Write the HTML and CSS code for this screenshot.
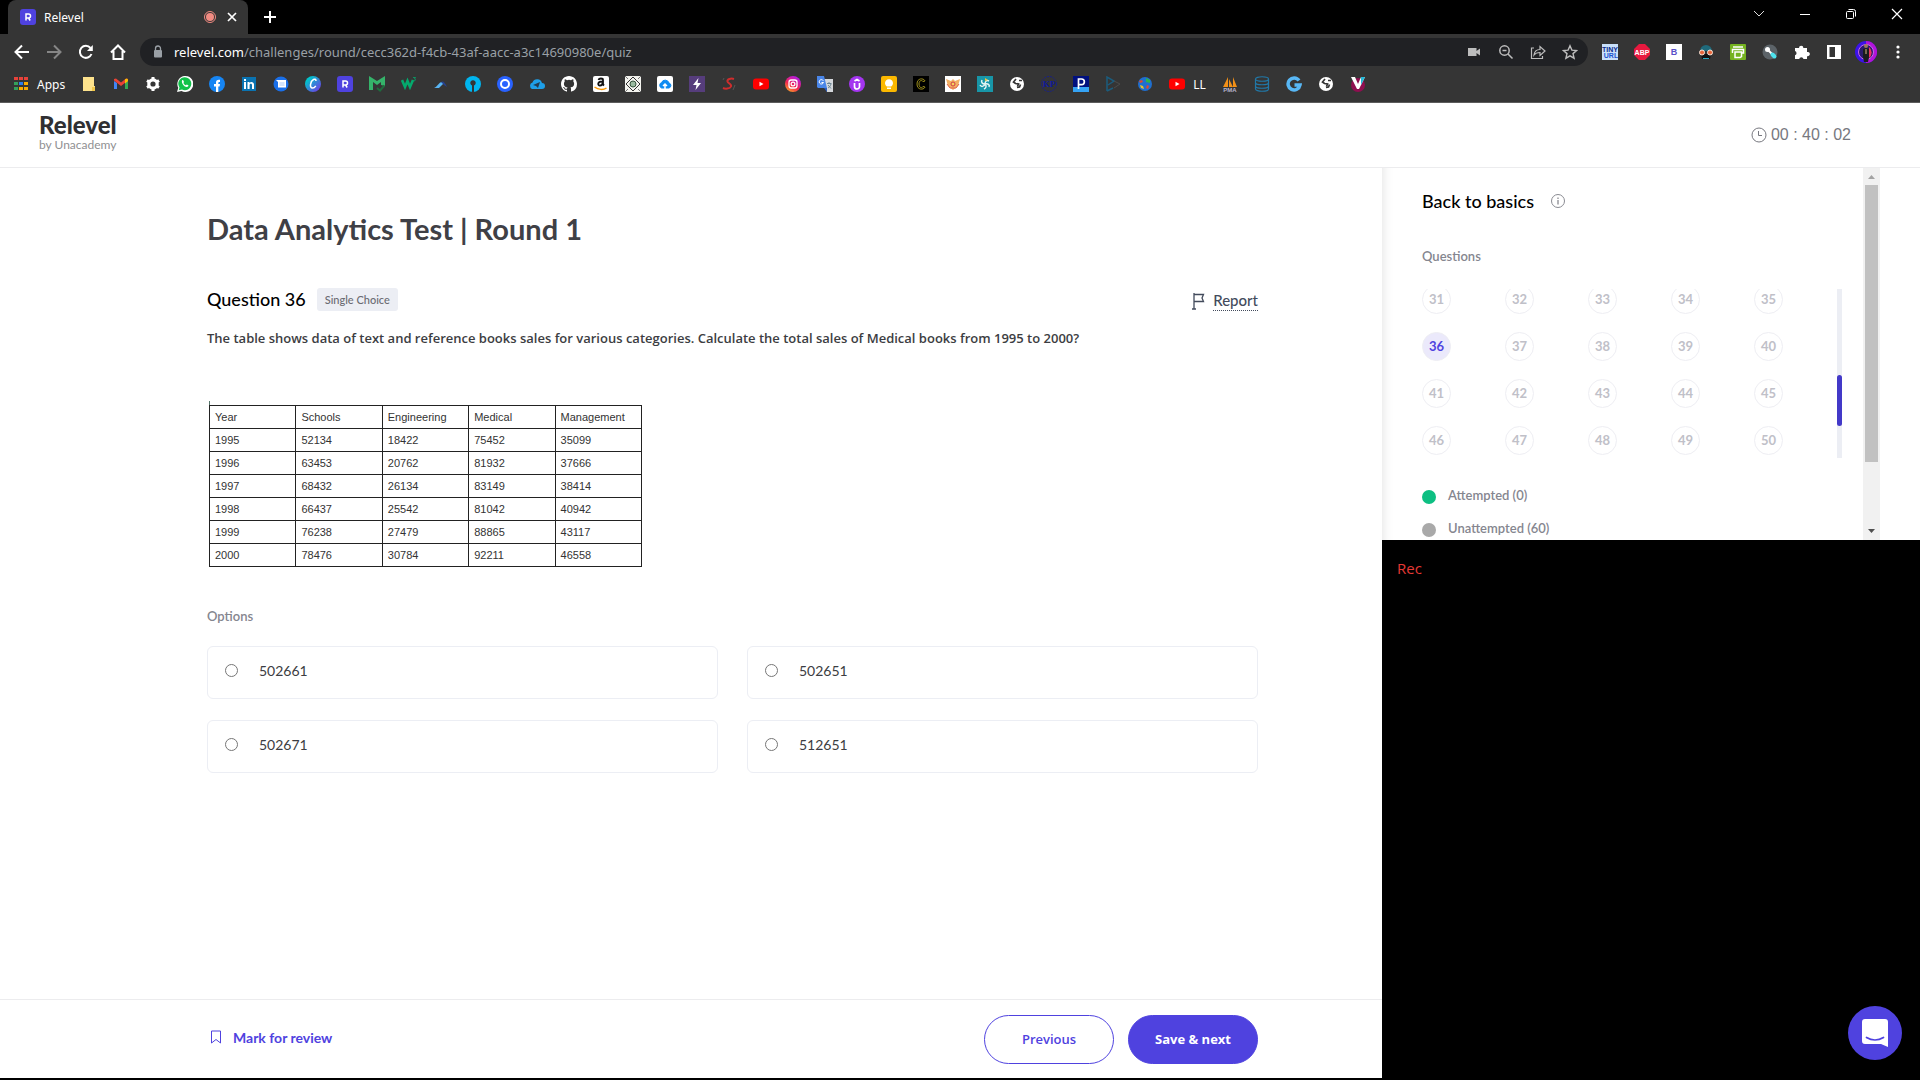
FILE: index.html
```html
<!DOCTYPE html>
<html lang="en">
<head>
<meta charset="utf-8">
<title>Relevel</title>
<link rel="stylesheet" href="styles.css">
</head>
<body>
<header class="browser">
  <div class="tabstrip">
    <div class="tab">
      <svg class="ic" viewBox="0 0 16 16"><rect width="16" height="16" rx="3" fill="#4f42df"/><path d="M6 11.500V5h2.500a1.900 1.900 0 0 1 0 4H6M8.500 9l1.700 2.500" fill="none" stroke="#fff" stroke-width="1.500"/></svg>
      <span class="tab-title">Relevel</span>
      <svg class="ic" viewBox="0 0 16 16"><circle cx="8" cy="8" r="5.500" fill="none" stroke="#f28b82"/><circle cx="8" cy="8" r="4" fill="#f28b82"/></svg>
      <button class="plain" aria-label="Close tab"><svg class="ic" viewBox="0 0 16 16"><path d="M4 4l8 8M12 4l-8 8" stroke="#fff" stroke-width="1.700"/></svg></button>
    </div>
    <button class="plain newtab" aria-label="New tab"><svg class="ic" viewBox="0 0 16 16"><path d="M8 2v12M2 8h12" stroke="#fff" stroke-width="2"/></svg></button>
    <div class="window-buttons">
      <button class="plain" aria-label="Search tabs"><svg class="ic" viewBox="0 0 16 16"><path d="M3 5l5 5 5-5" fill="none" stroke="#ddd"/></svg></button>
      <button class="plain" aria-label="Minimize"><svg class="ic" viewBox="0 0 16 16"><path d="M3 8.500h10" stroke="#fff"/></svg></button>
      <button class="plain" aria-label="Restore"><svg class="ic" viewBox="0 0 16 16"><rect x="3.500" y="5.500" width="7" height="7" rx="1" fill="none" stroke="#fff"/><path d="M5.500 3.500h5a2 2 0 0 1 2 2v5" fill="none" stroke="#fff"/></svg></button>
      <button class="plain" aria-label="Close"><svg class="ic" viewBox="0 0 16 16"><path d="M3 3l10 10M13 3L3 13" stroke="#fff" stroke-width="1.200"/></svg></button>
    </div>
  </div>
  <div class="toolbar">
    <button class="plain" aria-label="Back"><svg class="ic" viewBox="0 0 16 16"><path d="M15 8H2M8 1.500L1.500 8 8 14.500" fill="none" stroke="#fff" stroke-width="2"/></svg></button>
    <button class="plain" aria-label="Forward"><svg class="ic" viewBox="0 0 16 16"><path d="M1 8h13M8 1.500L14.500 8 8 14.500" fill="none" stroke="#868686" stroke-width="2"/></svg></button>
    <button class="plain" aria-label="Reload"><svg class="ic" viewBox="0 0 16 16"><path d="M13.500 10A6 6 0 1 1 12.500 4" fill="none" stroke="#fff" stroke-width="2"/><path d="M14.800 1v6H9z" fill="#fff"/></svg></button>
    <button class="plain" aria-label="Home"><svg class="ic" viewBox="0 0 16 16"><path d="M1 8.500L8 1.500l7 7M3.500 7v8h9V7" fill="none" stroke="#fff" stroke-width="2"/></svg></button>
    <div class="omnibox">
      <svg class="ic" viewBox="0 0 16 16"><rect x="4" y="6" width="8" height="7.500" rx="1" fill="#9aa0a6"/><path d="M5.500 6V4.500a2.500 2.500 0 0 1 5 0V6" fill="none" stroke="#9aa0a6" stroke-width="1.300"/></svg>
      <span class="url"><b>relevel.com</b>/challenges/round/cecc362d-f4cb-43af-aacc-a3c14690980e/quiz</span>
      <span class="omni-icons">
        <svg class="ic" viewBox="0 0 16 16"><path d="M2 4h8.500v3L14 4.500v7L10.500 9v3H2z" fill="#bdbdbd"/></svg>
        <svg class="ic" viewBox="0 0 16 16"><circle cx="6.500" cy="6.500" r="4.700" fill="none" stroke="#bdbdbd" stroke-width="1.500"/><path d="M10 10l4.500 4.500M4.500 6.500h4" stroke="#bdbdbd" stroke-width="1.500"/></svg>
        <svg class="ic" viewBox="0 0 16 16"><path d="M4 4H1.500v10.500h11V12M4 11c.5-4 3-5.500 6-5.500V2.500l5 4.500-5 4.500V8.500C7.500 8.500 5.500 9 4 11z" fill="none" stroke="#bdbdbd" stroke-width="1.200"/></svg>
        <svg class="ic" viewBox="0 0 16 16"><path d="M8 1.800l1.900 4.300 4.700.4-3.600 3.100 1.100 4.600L8 11.800l-4.100 2.400L5 9.600 1.400 6.500l4.700-.4z" fill="none" stroke="#bdbdbd" stroke-width="1.400"/></svg>
      </span>
    </div>
    <div class="extensions">
      <svg class="ic" viewBox="0 0 16 16"><rect width="16" height="16" fill="#c9e0fa"/><text x="8" y="8" text-anchor="middle" class="t7" fill="#0b2a8c">TINY</text><text x="9" y="14" text-anchor="middle" class="t7" fill="#1d53d0">URL</text></svg>
      <svg class="ic" viewBox="0 0 16 16"><path d="M5 0h6l5 5v6l-5 5H5l-5-5V5z" fill="#e8193f"/><text x="8" y="10.500" text-anchor="middle" class="t7" fill="#fff">ABP</text></svg>
      <svg class="ic" viewBox="0 0 16 16"><rect width="16" height="16" fill="#fff"/><text x="8" y="11" text-anchor="middle" class="t9" fill="#5a50c8">B</text></svg>
      <svg class="ic" viewBox="0 0 16 16"><path d="M2 7a6 6 0 0 1 12 0z" fill="#1f6a7c"/><path d="M3 10h10l-1 5H4z" fill="#111"/><path d="M5 14.500h6" stroke="#2aa7bd"/><circle cx="4" cy="8.500" r="2.500" fill="#e8673c" stroke="#f5e6da"/><circle cx="12" cy="8.500" r="2.500" fill="#e8673c" stroke="#f5e6da"/></svg>
      <svg class="ic" viewBox="0 0 16 16"><rect width="16" height="16" rx="1" fill="#75b320"/><path d="M3 3h10M2.500 9V5.500h11V9h-2M5 8h6.500v4.500L10 13.500H5z" fill="none" stroke="#fff" stroke-width="1.500"/></svg>
      <svg class="ic" viewBox="0 0 16 16"><circle cx="8" cy="8" r="7.500" fill="#5c6368"/><circle cx="5.500" cy="5.500" r="2.500" fill="#fff"/><path d="M6 6l4 4" stroke="#fff" stroke-width="2"/><path d="M10.500 10.500l2 2" stroke="#4ee3ee" stroke-width="4" stroke-linecap="round"/></svg>
      <svg class="ic" viewBox="0 0 16 16"><path d="M1 4h4a2.200 2.200 0 1 1 4.400 0H13v4a2.200 2.200 0 1 1 0 4.200V15H9.500a2.200 2.200 0 0 0-4.300 0H1v-3.700a2.200 2.200 0 0 0 0-4.200z" fill="#fff"/></svg>
      <svg class="ic" viewBox="0 0 16 16"><path d="M1 1h14v14H1zM3.500 3v10H9V3z" fill="#fff" fill-rule="evenodd"/></svg>
      <svg class="avatar" viewBox="0 0 22 22"><circle cx="11" cy="11" r="11" fill="#3b12e8"/><path d="M11 0a11 11 0 0 1 0 22z" fill="#b313d8"/><circle cx="11" cy="11" r="7.500" fill="#2b1a6e" stroke="#c86be8"/><path d="M14 6a7 7 0 0 1 0 11z" fill="#f0325e"/><circle cx="11" cy="5" r="2" fill="#9b7a55"/><path d="M8 8l3-1 3 1v8l-1 5H9l-1-5z" fill="#1b1c1e"/><path d="M11 8v5" stroke="#d6b684"/></svg>
      <svg class="ic" viewBox="0 0 16 16"><g fill="#fff"><circle cx="8" cy="3" r="1.600"/><circle cx="8" cy="8" r="1.600"/><circle cx="8" cy="13" r="1.600"/></g></svg>
    </div>
  </div>
  <nav class="bookmarks" aria-label="Bookmarks">
    <a href="#" class="apps"><svg class="ic" viewBox="0 0 16 16"><g fill="#e8423a"><path d="M1 1h4v3H1zM6 1h4v3H6zM11 1h4v3h-4z"/></g><path d="M1 6h4v3H1zM1 11h4v3H1z" fill="#34a05a"/><path d="M6 6h4v3H6z" fill="#2b7de9"/><path d="M11 6h4v3h-4zM6 11h4v3H6zM11 11h4v3h-4z" fill="#f9ab00"/></svg>Apps</a>
    <a href="#" aria-label="Folder"><svg class="ic" viewBox="0 0 16 16"><path d="M2 1h11v9h1v5H2z" fill="#fde28c"/><path d="M11 15v-4h3v4z" fill="#f2c84b"/></svg></a>
    <a href="#" aria-label="Gmail"><svg class="ic" viewBox="0 0 16 16"><path d="M1 5v8h3V7z" fill="#4285f4"/><path d="M12 7v6h3V5z" fill="#34a853"/><path d="M1 4.500V3l2-.5 5 4 5-4 2 .5v1.500L8 10z" fill="#ea4335"/><path d="M12 3.300l2-.8 1 1v1.800L12 7.500z" fill="#fbbc04"/></svg></a>
    <a href="#" aria-label="Settings"><svg class="ic" viewBox="0 0 16 16"><circle cx="8" cy="8" r="4.200" fill="none" stroke="#fff" stroke-width="3.200"/><path d="M8 1v2.500M8 12.500V15M2 4.500l2 1.200M12 10.300l2 1.200M2 11.500l2-1.200M12 5.700l2-1.200" stroke="#fff" stroke-width="3"/></svg></a>
    <a href="#" aria-label="WhatsApp"><svg class="ic" viewBox="0 0 16 16"><path d="M0 16l1.300-4.200A8 8 0 1 1 4.500 15z" fill="#fff"/><path d="M1.700 14.300l.8-2.800A6.500 6.500 0 1 1 5 13.600z" fill="#12c24b"/><path d="M5 4.500c1-1 1.500 0 2 1.500l-.6 1c.5 1 1.500 2 2.500 2.300l.9-.8c1.500.6 2.200 1 1.200 2-2 2-7-2.500-6-6z" fill="#fff"/></svg></a>
    <a href="#" aria-label="Facebook"><svg class="ic" viewBox="0 0 16 16"><circle cx="8" cy="8" r="8" fill="#1685f3"/><path d="M7 16v-5.500H5V8h2V6.500C7 4.300 8.200 3.500 11 3.800V6c-1.500 0-1.700.2-1.700 1V8H11l-.4 2.500H9.300V16z" fill="#fff"/></svg></a>
    <a href="#" aria-label="LinkedIn"><svg class="ic" viewBox="0 0 16 16"><path d="M1 1h14v14H1z" fill="#0a73b1"/><path d="M3 6h2v7H3zM3 3h2v2H3zM6.500 6h2v1c1-1.800 4.500-1.500 4.500 1.500V13h-2V9c0-1.800-2.400-1.800-2.400 0v4H6.500z" fill="#fff"/></svg></a>
    <a href="#" aria-label="Messages"><svg class="ic" viewBox="0 0 16 16"><circle cx="8" cy="8" r="7.500" fill="#1a6fe8"/><path d="M3 4h10v7.500H5V6z" fill="#fff"/><path d="M6.500 7h5M6.500 9h5" stroke="#a9c8f8"/></svg></a>
    <a href="#" aria-label="Canva"><svg class="ic" viewBox="0 0 16 16"><linearGradient id="cv" x2="1" y2="1"><stop offset=".2" stop-color="#00c4cc"/><stop offset="1" stop-color="#7d2ae8"/></linearGradient><circle cx="8" cy="8" r="8" fill="url(#cv)"/><path d="M11 5c0-2-1.500-2-2.500-1.500C5.500 5 4 12 7.500 12c1.500 0 2.500-1 3.300-2.200" fill="none" stroke="#fff" stroke-width="1.500"/></svg></a>
    <a href="#" aria-label="Relevel"><svg class="ic" viewBox="0 0 16 16"><rect width="16" height="16" rx="3" fill="#4f42df"/><path d="M6 11.500V5h2.500a1.900 1.900 0 0 1 0 4H6M8.500 9l1.700 2.500" fill="none" stroke="#fff" stroke-width="1.500"/></svg></a>
    <a href="#" aria-label="Mail check"><svg class="ic" viewBox="0 0 16 16"><path d="M0 0l8 5 8-5v10l-4-1V6L8 9 4 6v8l-4 0z" fill="#35b36a"/><path d="M8 12l3 2.500 4.500-5" fill="none" stroke="#1f6b3d" stroke-width="2"/></svg></a>
    <a href="#" aria-label="W3Schools"><svg class="ic" viewBox="0 0 16 16"><path d="M1 4l3 7 2.500-6L9 11l3-7" fill="none" stroke="#04aa6d" stroke-width="2.600"/><path d="M12 1.500h2.500L13.500 3c1.500 0 1.500 2-1 1.800" fill="none" stroke="#04aa6d" stroke-width=".8"/></svg></a>
    <a href="#" aria-label="Cloud tool"><svg class="ic" viewBox="0 0 16 16"><path d="M1 12c3-1 5-6 8-6l2 1-5 5z" fill="#58b5f4"/><path d="M8 6c2-1 3-1 6 5l-3-2z" fill="#26418f"/></svg></a>
    <a href="#" aria-label="Keyhole"><svg class="ic" viewBox="0 0 16 16"><circle cx="8" cy="8" r="8" fill="#00b5ef"/><path d="M7 16V9.500a2.700 2.700 0 1 1 2 0V16z" fill="#353535"/></svg></a>
    <a href="#" aria-label="Circle"><svg class="ic" viewBox="0 0 16 16"><circle cx="8" cy="8" r="8" fill="#2962ff"/><circle cx="8" cy="8" r="4" fill="none" stroke="#fff" stroke-width="2"/></svg></a>
    <a href="#" aria-label="Cloud send"><svg class="ic" viewBox="0 0 16 16"><path d="M3 13a3.500 3.500 0 0 1 .5-6.500A5 5 0 0 1 13 7a3 3 0 0 1 0 6z" fill="#1e9fe8"/><path d="M4 9l7-3-2 6-2-2z" fill="#233b50"/></svg></a>
    <a href="#" aria-label="GitHub"><svg class="ic" viewBox="0 0 16 16"><path fill="#fff" d="M8 0C3.580 0 0 3.580 0 8c0 3.540 2.290 6.530 5.470 7.590.4.070.55-.17.55-.38 0-.19-.01-.82-.01-1.490-2.010.37-2.530-.49-2.690-.94-.09-.23-.48-.94-.82-1.130-.28-.15-.68-.52-.01-.53.63-.01 1.080.58 1.230.82.72 1.210 1.870.87 2.330.66.07-.52.28-.87.51-1.070-1.780-.2-3.640-.89-3.640-3.950 0-.87.31-1.590.82-2.150-.08-.2-.36-1.020.08-2.120 0 0 .67-.21 2.200.82a7.600 7.600 0 0 1 4 0c1.530-1.040 2.200-.82 2.200-.82.44 1.100.16 1.920.08 2.120.51.56.82 1.270.82 2.150 0 3.070-1.870 3.750-3.650 3.950.29.25.54.73.54 1.480 0 1.070-.01 1.930-.01 2.200 0 .21.15.46.55.38A8 8 0 0 0 16 8c0-4.420-3.580-8-8-8z"/></svg></a>
    <a href="#" aria-label="Amazon"><svg class="ic" viewBox="0 0 16 16"><rect width="16" height="16" rx="2" fill="#fff"/><path d="M5.500 4c.5-2 4.500-2 4.500 0v4.500l1 1M9.500 5.500C3.500 5.500 5 10 7 9.500c1.500 0 2.500-1 2.500-2.500" fill="none" stroke="#111" stroke-width="1.800"/><path d="M1.500 11c4 3 9 3 12 1" fill="none" stroke="#ff9900" stroke-width="1.500"/></svg></a>
    <a href="#" aria-label="Diamond"><svg class="ic" viewBox="0 0 16 16"><rect width="16" height="16" fill="#f3f3ee"/><path d="M8 1l7 7-7 7-7-7z" fill="none" stroke="#333"/><circle cx="8" cy="8" r="3" fill="#9bbba0" stroke="#35523b"/><path d="M0 0l3 3M13 13l3 3M16 0l-3 3M0 16l3-3" stroke="#777"/></svg></a>
    <a href="#" aria-label="Cloud upload"><svg class="ic" viewBox="0 0 16 16"><rect width="16" height="16" rx="2" fill="#fff"/><path d="M4.500 12a3 3 0 0 1 0-5.500 4 4 0 0 1 7.500.5 2.600 2.600 0 0 1 0 5z" fill="#0d8bf2" stroke="#0d8bf2"/><path d="M8 14V8M6 10l2-2 2 2" fill="none" stroke="#fff" stroke-width="1.500"/></svg></a>
    <a href="#" aria-label="Bolt"><svg class="ic" viewBox="0 0 16 16"><path d="M0 0h16v16H0z" fill="#563d7c"/><path d="M9.500 2L4 9h3.500L6.500 14 12 7H8.500z" fill="#fff"/></svg></a>
    <a href="#" aria-label="Script S"><svg class="ic" viewBox="0 0 16 16"><path d="M13 3c-3-1-7 0-6.500 2.500C7 7.500 11 8 10 10.500 9 13 4 13 2 12" fill="none" stroke="#cf2d2d" stroke-width="2"/><path d="M3 2l-1 2M14 9l-2 5" stroke="#555"/></svg></a>
    <a href="#" aria-label="YouTube"><svg class="ic" viewBox="0 0 16 16"><rect y="2.500" width="16" height="11" rx="3" fill="#f00"/><path d="M6.500 5.700v4.600l4-2.300z" fill="#fff"/></svg></a>
    <a href="#" aria-label="Instagram"><svg class="ic" viewBox="0 0 16 16"><linearGradient id="ig" y1="1" x2=".6" y2="0"><stop offset="0" stop-color="#fdc21e"/><stop offset=".5" stop-color="#f2264f"/><stop offset="1" stop-color="#b51be0"/></linearGradient><circle cx="8" cy="8" r="8" fill="url(#ig)"/><rect x="4" y="4" width="8" height="8" rx="2.200" fill="none" stroke="#fff" stroke-width="1.300"/><circle cx="8" cy="8" r="1.900" fill="none" stroke="#fff" stroke-width="1.200"/></svg></a>
    <a href="#" aria-label="Translate"><svg class="ic" viewBox="0 0 16 16"><path d="M7 3h9v13h-6z" fill="#d5d8dc"/><path d="M0 0h7l3 12H1l-1-1z" fill="#4a86e8"/><path d="M7 12h3l0 4z" fill="#2b5cc0"/><path d="M6.300 4.700A2.200 2.200 0 1 0 6.500 6.500H4.500" fill="none" stroke="#fff"/><path d="M10 7.500h4.500M12 6v1.500M14 8c-.5 2-2 3.500-3 4M11 9l3 3.500" fill="none" stroke="#607d8b" stroke-width=".9"/></svg></a>
    <a href="#" aria-label="Udemy"><svg class="ic" viewBox="0 0 16 16"><circle cx="8" cy="8" r="8" fill="#a435f0"/><path d="M5.500 7v3.500a2.500 2.500 0 0 0 5 0V7M5.500 5L8 3.500 10.500 5" fill="none" stroke="#fff" stroke-width="1.700"/></svg></a>
    <a href="#" aria-label="Keep"><svg class="ic" viewBox="0 0 16 16"><rect width="16" height="16" rx="2" fill="#fbb800"/><path d="M5.800 10.500a4 4 0 1 1 4.400 0zM6 11.500h4V13H6z" fill="#fff"/></svg></a>
    <a href="#" aria-label="C site"><svg class="ic" viewBox="0 0 16 16"><path d="M0 0h16v16H0z"/><path d="M12 5C11 2 4 1.500 4 8s7 6 8 3l-2-.5c-1 2-4 1.500-4-2.500s3-4 4-2.500z" fill="none" stroke="#9c8e1c"/></svg></a>
    <a href="#" aria-label="Crest"><svg class="ic" viewBox="0 0 16 16"><path d="M0 0h16v16H0z" fill="#fff"/><path d="M1 3l5 2 2-2 2 2 5-2-2 7-5 4-5-4z" fill="#f2b063"/><path d="M2 8l3 4h6l3-4" fill="none" stroke="#e0604a"/><circle cx="8" cy="8" r="2" fill="#f6d55b" stroke="#d03a4b"/></svg></a>
    <a href="#" aria-label="Flower"><svg class="ic" viewBox="0 0 16 16"><path d="M0 0h16v16H0z" fill="#1896a8"/><g fill="none" stroke="#e5f5f2" stroke-width="1.500"><path d="M8 8c0-3 2-4 4-3M8 8c3-1 5 1 4 3M8 8c2 2 1 4-1 5M8 8c-1 3-4 3-5 1M8 8C5 8 4 6 5 4"/></g><path d="M8 2l3 2-3 1z" fill="#f4c534"/></svg></a>
    <a href="#" aria-label="Globe"><svg class="ic" viewBox="0 0 16 16"><circle cx="8" cy="8" r="7" fill="#fff"/><path d="M7 3L4.500 6l2 1.500 3 .5-1 2.500M10 4.500h3M8 11.500l2.500-.5 1-2.500" fill="none" stroke="#353535" stroke-width="1.700"/></svg></a>
    <a href="#" aria-label="KP"><svg class="ic" viewBox="0 0 16 16"><circle cx="8" cy="8" r="7.500" fill="none" stroke="#17208c" stroke-dasharray="2 1"/><text x="8" y="11" text-anchor="middle" class="t9 serif" fill="#0f1a9c">KP</text></svg></a>
    <a href="#" aria-label="P site"><svg class="ic" viewBox="0 0 16 16"><path d="M0 0h16v16H0z" fill="#00107f"/><path d="M0 11h16v5H0z" fill="#35a3f5"/><path d="M5.500 13V3h3a2.700 2.700 0 0 1 0 5.700h-3" fill="none" stroke="#fff" stroke-width="1.700"/></svg></a>
    <a href="#" aria-label="Play"><svg class="ic" viewBox="0 0 16 16"><path d="M2 15V1l7 4-6 4M2 15l6-3" fill="none" stroke="#1b5c7d" stroke-width="1.500"/><path d="M9 5l6 3-6 4" fill="none" stroke="#4b4b4b"/></svg></a>
    <a href="#" aria-label="World"><svg class="ic" viewBox="0 0 16 16"><circle cx="8" cy="8" r="7" fill="#1f6fd0"/><path d="M9 2l4 2 0 3-4-1z" fill="#2cb34a"/><path d="M2 5l3-1 1 2-3 1zM10 9l2 1-1 3-2-1z" fill="#e0482e"/><path d="M3 9l3 1 1 3-3-1z" fill="#e6c02d"/></svg></a>
    <a href="#" class="labelled"><svg class="ic" viewBox="0 0 16 16"><rect y="2.500" width="16" height="11" rx="3" fill="#f00"/><path d="M6.500 5.700v4.600l4-2.300z" fill="#fff"/></svg>LL</a>
    <a href="#" aria-label="phpMyAdmin"><svg class="ic" viewBox="0 0 16 16"><path d="M1 11L6 1v10zM7 11V3l4 8zM11 11V1l4 10z" fill="#f29018"/><text x="8" y="15.500" text-anchor="middle" class="t6" fill="#b6b4cc">PMA</text></svg></a>
    <a href="#" aria-label="Database"><svg class="ic" viewBox="0 0 16 16"><path d="M1.500 3c0-3 13-3 13 0v10c0 3-13 3-13 0zM1.500 3c0 3 13 3 13 0M1.500 6.500c0 3 13 3 13 0M1.500 10c0 3 13 3 13 0" fill="none" stroke="#2178a8" stroke-width="1.200"/></svg></a>
    <a href="#" aria-label="G site"><svg class="ic" viewBox="0 0 16 16"><path d="M13 4.500A6 6 0 1 0 14 9H8.500" fill="none" stroke="#58b7f5" stroke-width="3.500"/></svg></a>
    <a href="#" aria-label="Globe"><svg class="ic" viewBox="0 0 16 16"><circle cx="8" cy="8" r="7" fill="#fff"/><path d="M7 3L4.500 6l2 1.500 3 .5-1 2.500M10 4.500h3M8 11.500l2.500-.5 1-2.500" fill="none" stroke="#353535" stroke-width="1.700"/></svg></a>
    <a href="#" aria-label="V site"><svg class="ic" viewBox="0 0 16 16"><circle cx="8" cy="9" r="7" fill="#8f0f50"/><path d="M1 1h4l3 7 3-7h4L9 13H7z" fill="#fff"/><path d="M11 1h4l-4 8z" fill="#26b8d8"/></svg></a>
  </nav>
</header>

<div class="site-header">
  <a href="#" class="logo"><span class="logo-name">Relevel</span><span class="logo-by">by Unacademy</span></a>
  <div class="timer"><svg class="ic" viewBox="0 0 16 16"><circle cx="8" cy="8" r="7" fill="none" stroke="#77787f"/><path d="M7.500 4v4.500h3.500" fill="none" stroke="#77787f"/></svg><span>00 : 40 : 02</span></div>
</div>

<div class="workspace">
  <main class="quiz">
    <div class="quiz-body">
      <h1>Data Analytics Test | Round 1</h1>
      <div class="question-head">
        <h2>Question 36</h2>
        <span class="badge">Single Choice</span>
        <button class="plain report"><svg viewBox="0 0 14 18"><path d="M3 1v16M1 17h4M3 2.500h9.500L11 6l1.500 3.500H3" fill="none" stroke="#434b5c" stroke-width="1.300"/></svg><span>Report</span></button>
      </div>
      <p class="prompt">The table shows data of text and reference books sales for various categories. Calculate the total sales of Medical books from 1995 to 2000?</p>
      <div class="figure">
        <table class="data">
          <thead><tr><th>Year</th><th>Schools</th><th>Engineering</th><th>Medical</th><th>Management</th></tr></thead>
          <tbody>
            <tr><td>1995</td><td>52134</td><td>18422</td><td>75452</td><td>35099</td></tr>
            <tr><td>1996</td><td>63453</td><td>20762</td><td>81932</td><td>37666</td></tr>
            <tr><td>1997</td><td>68432</td><td>26134</td><td>83149</td><td>38414</td></tr>
            <tr><td>1998</td><td>66437</td><td>25542</td><td>81042</td><td>40942</td></tr>
            <tr><td>1999</td><td>76238</td><td>27479</td><td>88865</td><td>43117</td></tr>
            <tr><td>2000</td><td>78476</td><td>30784</td><td>92211</td><td>46558</td></tr>
          </tbody>
        </table>
      </div>
      <fieldset>
        <legend>Options</legend>
        <div class="options">
          <label><input type="radio" name="answer">502661</label>
          <label><input type="radio" name="answer">502651</label>
          <label><input type="radio" name="answer">502671</label>
          <label><input type="radio" name="answer">512651</label>
        </div>
      </fieldset>
    </div>
    <footer class="actions">
      <button class="plain review"><svg viewBox="0 0 12 14"><path d="M1.500 1h9v12L6 9.500 1.500 13z" fill="none" stroke="#4f42df"/></svg>Mark for review</button>
      <button class="pill">Previous</button>
      <button class="pill primary">Save &amp; next</button>
    </footer>
  </main>
  <aside class="side">
    <div class="panel">
      <div class="panel-body">
        <h3>Back to basics <svg class="ic" viewBox="0 0 16 16"><circle cx="8" cy="8" r="6.500" fill="none" stroke="#8a8b92"/><path d="M8 7v4.500M8 4.500V6" stroke="#8a8b92" stroke-width="1.300"/></svg></h3>
        <h4>Questions</h4>
        <div class="question-list">
          <div class="numbers">
            <button>31</button><button>32</button><button>33</button><button>34</button><button>35</button>
            <button class="current">36</button><button>37</button><button>38</button><button>39</button><button>40</button>
            <button>41</button><button>42</button><button>43</button><button>44</button><button>45</button>
            <button>46</button><button>47</button><button>48</button><button>49</button><button>50</button>
          </div>
          <div class="list-track"><div class="list-thumb"></div></div>
        </div>
        <ul class="legend">
          <li><i class="dot done"></i>Attempted (0)</li>
          <li><i class="dot"></i>Unattempted (60)</li>
        </ul>
      </div>
      <div class="scrollbar">
        <svg viewBox="0 0 17 17"><path d="M5 11l3.500-4 3.500 4z" fill="#a3a3a3"/></svg>
        <div class="scroll-thumb"></div>
        <svg viewBox="0 0 17 17"><path d="M5 6l3.500 4L12 6z" fill="#505050"/></svg>
      </div>
    </div>
    <div class="recording">Rec</div>
  </aside>
</div>
<button class="chat" aria-label="Open chat"><svg viewBox="0 0 54 54"><path d="M17 13h20a3 3 0 0 1 3 3v25l-7-3H17a3 3 0 0 1-3-3V16a3 3 0 0 1 3-3z" fill="#fff"/><path d="M18.500 31.500q8.500 5 17 0" fill="none" stroke="#4f42df" stroke-width="1.700" stroke-linecap="round"/></svg></button>
</body>
</html>
```

FILE: styles.css
```css
* { box-sizing: border-box; }

body {
  margin: 0;
  min-height: 100vh;
  display: flex;
  flex-direction: column;
  font-family: Lato, "Open Sans", sans-serif;
  color: #3c3d42;
  background: #fff;
  border-bottom: 2px solid #000;
}

h1, h2, h3, h4, p, ul, fieldset, legend { margin: 0; padding: 0; }
a { color: inherit; text-decoration: none; }
svg { display: block; flex: none; }
button { font: inherit; cursor: pointer; }

.plain { padding: 0; border: 0; background: none; color: inherit; }
.ic { width: 16px; height: 16px; }

/* Browser frame */
.browser {
  font-family: "Noto Sans", "Open Sans", sans-serif;
  font-size: 12px;
  color: #fff;
  background: #353535;
  border-bottom: 1px solid #5c5c5c;
}
.tabstrip { display: flex; align-items: center; height: 34px; padding: 0 15px 0 8px; background: #000; }
.tab {
  display: flex;
  align-items: center;
  width: 240px;
  height: 34px;
  padding: 0 8px 0 12px;
  border-radius: 8px 8px 0 0;
  background: #353535;
}
.tab-title { flex: 1; padding-left: 8px; }
.tab .plain { margin-left: 6px; }
.newtab { margin-left: 14px; }
.window-buttons { display: flex; gap: 30px; margin-left: auto; padding-bottom: 6px; }

.toolbar { display: flex; align-items: center; gap: 16px; height: 36px; padding: 0 14px; }
.omnibox {
  flex: 1;
  display: flex;
  align-items: center;
  gap: 8px;
  height: 28px;
  margin-left: -2px;
  padding: 0 10px;
  border-radius: 14px;
  background: #202124;
}
.url { flex: 1; font-size: 13px; color: #9aa0a6; }
.url b { font-weight: 400; color: #fff; }
.omni-icons { display: flex; gap: 16px; }
.extensions { display: flex; align-items: center; gap: 16px; margin-left: -2px; }
.avatar { width: 22px; height: 22px; margin: 0 -3px; }

.bookmarks { display: flex; align-items: center; gap: 16px; height: 32px; padding: 0 13px 4px; }
.apps, .labelled { display: flex; align-items: center; gap: 8px; }

.t6 { font: bold 6px "Liberation Sans", sans-serif; }
.t7 { font: bold 7px "Liberation Sans", sans-serif; }
.t9 { font: bold 9px "Liberation Sans", sans-serif; }
.serif { font-family: "Liberation Serif", serif; }

/* Site header */
.site-header {
  display: flex;
  align-items: center;
  justify-content: space-between;
  height: 65px;
  padding: 0 69px 2px 39px;
  border-bottom: 1px solid #ececee;
}
.logo { display: flex; flex-direction: column; padding-bottom: 6px; }
.logo-name { font-size: 24px; line-height: 26px; font-weight: 900; color: #303033; }
.logo-by { font-size: 12px; line-height: 13px; color: #8f8f92; }
.timer { display: flex; align-items: center; gap: 4px; padding-top: 2px; font: 16px "Liberation Sans", sans-serif; color: #77787f; }

/* Quiz */
.workspace { flex: 1; display: flex; }
.quiz { flex: 1; display: flex; flex-direction: column; }
.quiz-body { flex: 1; padding: 41px 124px 0 207px; }
h1 { font-size: 29px; line-height: 40px; color: #3f4046; }
.question-head { display: flex; align-items: center; gap: 11px; margin-top: 38px; height: 24px; }
h2 { font-size: 18px; line-height: 24px; font-weight: 500; color: #000; }
.badge { padding: 0 8px; border-radius: 3px; font-size: 11px; line-height: 23px; font-weight: 500; color: #6a6b72; background: #eceef4; }
.report { display: flex; align-items: center; gap: 8px; margin-left: auto; padding-top: 3px; font-size: 15px; font-weight: 500; color: #434b5c; }
.report svg { width: 14px; height: 18px; }
.report span { line-height: 20px; border-bottom: 1px dotted #434b5c; }
.prompt { margin-top: 15px; font-family: "Open Sans", Lato, sans-serif; font-size: 13px; line-height: 24px; font-weight: 600; }

.figure { margin: 51px 0 0 2px; }
.figure::before { content: ""; display: block; width: 1px; height: 4px; background: #55756a; }
.data {
  width: 433px;
  border-collapse: collapse;
  table-layout: fixed;
  font: 11px "Liberation Sans", sans-serif;
  color: #333;
}
.data th, .data td { height: 23px; padding: 0 5px; border: 1px solid #222; font-weight: 400; text-align: left; }

fieldset { min-width: 0; border: 0; margin-top: 39px; }
legend { font-size: 13px; line-height: 20px; font-weight: 600; color: #85868f; }
.options { display: grid; grid-template-columns: 1fr 1fr; gap: 21px 29px; margin-top: 20px; }
.options label {
  display: flex;
  align-items: center;
  height: 53px;
  padding: 0 17px 4px;
  border: 1px solid #eceef4;
  border-radius: 6px;
  font-size: 14px;
}
.options input { width: 13px; height: 13px; margin: 0 21px 0 0; }

.actions {
  display: flex;
  align-items: center;
  gap: 14px;
  height: 79px;
  padding: 0 124px 0 210px;
  border-top: 1px solid #ececee;
}
.review { display: flex; align-items: center; gap: 11px; margin-right: auto; padding-bottom: 4px; font-size: 14px; font-weight: 700; color: #4f42df; }
.review svg { width: 12px; height: 14px; }
.pill {
  width: 130px;
  height: 49px;
  border: 1px solid #4f42df;
  border-radius: 25px;
  font: 600 13px "Open Sans", sans-serif;
  color: #4f42df;
  background: #fff;
}
.primary { font-weight: 700; color: #fff; background: #4f42df; }

/* Side column */
.side { flex: 0 0 538px; display: flex; flex-direction: column; }
.panel { display: flex; height: 372px; padding-right: 40px; overflow: hidden; box-shadow: inset 12px 0 12px -12px #0002; }
.panel-body { flex: 1; padding: 20px 21px 0 40px; }
h3 { display: flex; align-items: center; gap: 16px; font-size: 18px; line-height: 26px; font-weight: 500; color: #000; }
h4 { margin-top: 32px; font-size: 13px; line-height: 20px; font-weight: 600; color: #85868f; }
.question-list { display: flex; justify-content: space-between; height: 169px; margin-top: 23px; overflow: hidden; }
.numbers { display: grid; grid-template-columns: repeat(5, 29px); gap: 18px 54px; align-content: end; padding-bottom: 3px; }
.numbers button {
  width: 29px;
  height: 29px;
  padding: 0 0 2px;
  border: 1px solid #eeeef3;
  border-radius: 50%;
  font-size: 13px;
  font-weight: 700;
  color: #c0c0c8;
  background: #fff;
}
.numbers .current { color: #4f42df; background: #ebe9fb; }
.list-track { width: 5px; padding-top: 86px; background: #eceef4; }
.list-thumb { height: 51px; border-radius: 3px; background: #4339c8; }
.legend { margin-top: 25px; list-style: none; font-size: 13px; font-weight: 600; color: #85868f; }
.legend li { display: flex; align-items: center; gap: 12px; height: 24px; margin-bottom: 9px; }
.dot { width: 14px; height: 14px; margin-top: 3px; border-radius: 50%; background: #a9a9a9; }
.done { background: #0dbf82; }

.scrollbar { display: flex; flex-direction: column; width: 17px; background: #f1f1f1; }
.scrollbar svg { width: 17px; height: 17px; }
.scroll-thumb { height: 277px; margin: 0 2px auto; background: #c1c1c1; }

.recording {
  flex: 1;
  padding: 16px 15px;
  font: 15px/24px "Open Sans", sans-serif;
  color: #e53935;
  background: #000;
}

.chat {
  position: fixed;
  right: 18px;
  bottom: 20px;
  width: 54px;
  height: 54px;
  padding: 0;
  border: 0;
  border-radius: 50%;
  background: #4f42df;
}
.chat svg { width: 54px; height: 54px; }
```
